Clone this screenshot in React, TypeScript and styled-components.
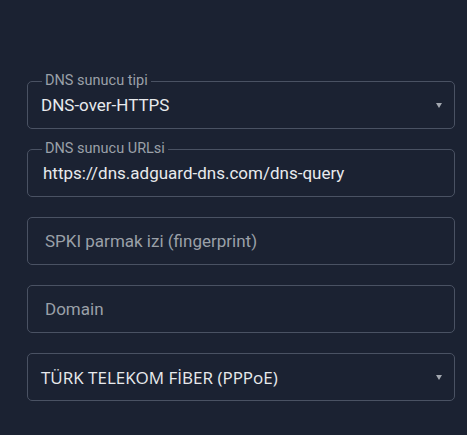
import React from 'react';
import styled, { createGlobalStyle } from 'styled-components';

const GlobalStyle = createGlobalStyle`
  html, body {
    margin: 0;
    padding: 0;
    background: #1b2232;
  }
  body {
    font-family: Roboto, "Liberation Sans", sans-serif;
  }
`;

const Page = styled.div`
  width: 467px;
  height: 435px;
  background: #1b2232;
  box-sizing: border-box;
  padding: 81px 12px 0 27px;
  display: flex;
  flex-direction: column;
  gap: 20px;
`;

const Field = styled.div`
  position: relative;
  width: 428px;
  height: 48px;
  box-sizing: border-box;
  border: 1px solid #4a5263;
  border-radius: 5px;
  display: flex;
  align-items: center;
`;

const Legend = styled.span`
  position: absolute;
  top: -10px;
  left: 14px;
  padding: 0 3px;
  background: #1b2232;
  color: #9aa0a8;
  font-size: 14.5px;
  line-height: 18px;
`;

const Value = styled.span<{ $pad: number; $muted?: boolean; $system?: boolean }>`
  flex: 1;
  padding-left: ${(p) => p.$pad}px;
  color: ${(p) => (p.$muted ? '#9aa0a8' : '#e8eaed')};
  font-size: 17px;
  font-family: ${(p) => (p.$system ? '"Open Sans", "Noto Sans", sans-serif' : 'Roboto, sans-serif')};
  white-space: nowrap;
`;

const Arrow = styled.span`
  width: 0;
  height: 0;
  margin-right: 12px;
  border-left: 3.5px solid transparent;
  border-right: 3.5px solid transparent;
  border-top: 5px solid #a3a8b0;
`;

export default function App() {
  return (
    <>
      <GlobalStyle />
      <Page>
        <Field>
          <Legend>DNS sunucu tipi</Legend>
          <Value $pad={13}>DNS-over-HTTPS</Value>
          <Arrow />
        </Field>
        <Field>
          <Legend>DNS sunucu URLsi</Legend>
          <Value $pad={15}>https://dns.adguard-dns.com/dns-query</Value>
        </Field>
        <Field>
          <Value $pad={17} $muted>SPKI parmak izi (fingerprint)</Value>
        </Field>
        <Field>
          <Value $pad={17} $muted>Domain</Value>
        </Field>
        <Field>
          <Value $pad={13} $system>TÜRK TELEKOM FİBER (PPPoE)</Value>
          <Arrow />
        </Field>
      </Page>
    </>
  );
}
